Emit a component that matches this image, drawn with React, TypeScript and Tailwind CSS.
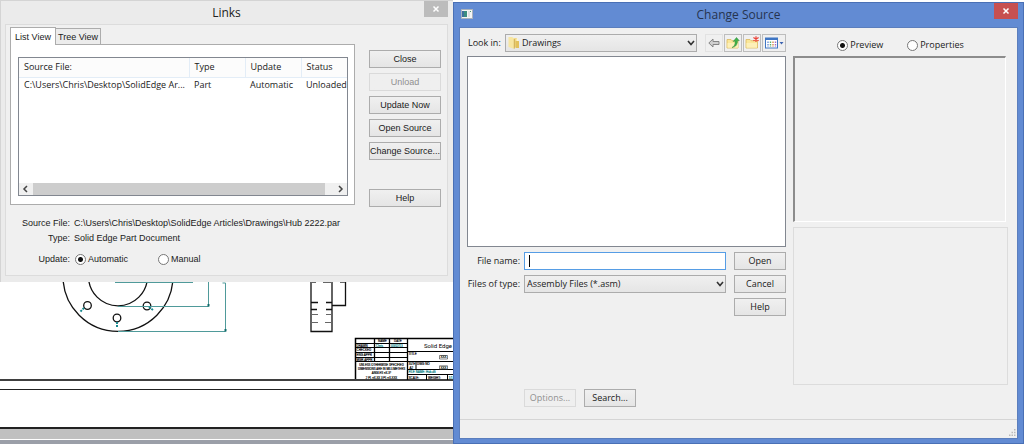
import { useState } from "react";
import type { ReactNode } from "react";

type LinkRow = { source: string; type: string; update: string; status: string };

const rows: LinkRow[] = [
  { source: "C:\\Users\\Chris\\Desktop\\SolidEdge Ar...", type: "Part", update: "Automatic", status: "Unloaded" },
];

const linkActions = [
  { label: "Close" },
  { label: "Unload", disabled: true },
  { label: "Update Now" },
  { label: "Open Source" },
  { label: "Change Source..." },
];

export default function App() {
  return (
    <div className="grid min-h-screen grid-cols-[453fr_571fr] overflow-hidden bg-white font-['Open_Sans','Noto_Sans',sans-serif] text-[9px] leading-3 text-[#1a1a1a]">
      <div className="flex min-w-0 flex-col">
        <LinksDialog />
        <Drawing />
        <div className="h-3 border-t-2 border-[#222] bg-[#c0c0c0]" />
        <div className="mt-px min-h-1 flex-1 bg-[#9b9fa8]" />
      </div>
      <ChangeSourceDialog />
    </div>
  );
}

function LinksDialog() {
  const [mode, setMode] = useState("Automatic");

  return (
    <section className="flex flex-col border-t border-l border-[#d4d4d4] bg-[#ebebeb] pr-[5px] pb-[6px] pl-1">
      <header className="relative flex h-[23px] justify-center">
        <h1 className="pt-1 text-[12px] leading-4 text-[#222]">Links</h1>
        <button aria-label="Close" className="absolute top-0 right-0 flex h-4 w-6 items-center justify-center bg-[#bcbcbc] text-white">
          <CrossIcon />
        </button>
      </header>

      <div className="border border-[#dcdcdc] bg-[#f0f0f0] pr-[6px] pb-[10px] pl-1 font-['Liberation_Sans',sans-serif]">
        <div className="flex gap-[14px]">
          <div className="min-w-0 flex-1 pt-[2px]">
            <div role="tablist" className="flex items-end">
              <button role="tab" aria-selected="true" className="relative z-10 -mb-px h-[18px] w-[46px] border border-b-0 border-[#acacac] bg-white">
                List View
              </button>
              <button role="tab" aria-selected="false" className="h-4 w-[45px] border border-b-0 border-l-0 border-[#acacac] bg-[#ececec]">
                Tree View
              </button>
            </div>
            <div className="border border-[#acacac] bg-white py-3 pr-[6px] pb-2 pl-[7px]">
              <div className="flex h-[139px] flex-col border border-[#828790] font-['Open_Sans',sans-serif]">
                <div className="min-h-0 flex-1 overflow-hidden">
                  <table className="w-full table-fixed text-left whitespace-nowrap">
                    <thead>
                      <tr className="h-[19px] bg-[#fcfcfc]">
                        <th className="border-r border-b border-[#e3edf7] pl-[5px] font-normal">Source File:</th>
                        <th className="w-14 border-r border-b border-[#e3edf7] pl-[5px] font-normal">Type</th>
                        <th className="w-14 border-r border-b border-[#e3edf7] pl-[5px] font-normal">Update</th>
                        <th className="w-[46px] border-b border-[#e3edf7] pl-[5px] font-normal">Status</th>
                      </tr>
                    </thead>
                    <tbody>
                      {rows.map((r) => (
                        <tr key={r.source} className="h-4">
                          <td className="pl-[5px]">{r.source}</td>
                          <td className="pl-[5px]">{r.type}</td>
                          <td className="pl-[5px]">{r.update}</td>
                          <td className="pl-[5px]">{r.status}</td>
                        </tr>
                      ))}
                    </tbody>
                  </table>
                </div>
                <div className="flex h-3 bg-[#f0f0f0]">
                  <button aria-label="Scroll left" className="flex w-[14px] items-center justify-center">
                    <Chevron d="M5 1 2 4l3 3" />
                  </button>
                  <div className="flex-1 bg-[#cdcdcd]" />
                  <div className="w-2" />
                  <button aria-label="Scroll right" className="flex w-[14px] items-center justify-center">
                    <Chevron d="m3 1 3 3-3 3" />
                  </button>
                </div>
              </div>
            </div>
          </div>

          <div className="flex w-[72px] flex-col gap-[5px] pt-[25px]">
            {linkActions.map((a) => (
              <PushButton key={a.label} disabled={a.disabled} className="h-[18px]">
                {a.label}
              </PushButton>
            ))}
            <PushButton className="mt-6 h-[18px]">Help</PushButton>
          </div>
        </div>

        <dl className="grid grid-cols-[60px_1fr] gap-x-1 gap-y-[3px] pt-[10px]">
          <dt className="text-right">Source File:</dt>
          <dd>C:\Users\Chris\Desktop\SolidEdge Articles\Drawings\Hub 2222.par</dd>
          <dt className="text-right">Type:</dt>
          <dd>Solid Edge Part Document</dd>
        </dl>
        <div role="radiogroup" aria-label="Update" className="flex items-center gap-[5px] pt-[9px]">
          <span className="w-[60px] text-right">Update:</span>
          <div className="flex gap-[30px]">
            {["Automatic", "Manual"].map((m) => (
              <Radio key={m} name="update" label={m} checked={mode === m} onChange={() => setMode(m)} />
            ))}
          </div>
        </div>
      </div>
    </section>
  );
}

function ChangeSourceDialog() {
  const [view, setView] = useState("Preview");
  const [fileName, setFileName] = useState("");

  return (
    <section className="mt-[2px] flex min-w-0 flex-col border border-[#4a70b5] bg-[#628bd3] px-[5px] pb-1">
      <header className="relative flex h-6 justify-center">
        <span className="absolute top-[6px] left-[2px]">
          <AppIcon />
        </span>
        <h2 className="pt-1 text-[12px] leading-4 text-[#26344f]">Change Source</h2>
        <button aria-label="Close" className="absolute top-0 right-0 flex h-4 w-6 items-center justify-center bg-[#c75050] text-white">
          <CrossIcon />
        </button>
      </header>

      <div className="flex flex-1 flex-col border border-[#5b7ebd] bg-[#f0f0f0]">
        <div className="flex flex-1 gap-[7px] pt-[6px] pr-[9px] pl-[7px]">
          <div className="flex min-w-0 flex-1 flex-col">
            <div className="flex h-[18px] items-center">
              <label htmlFor="look-in" className="w-[38px] pl-px">
                Look in:
              </label>
              <div className="relative flex-1">
                <span className="pointer-events-none absolute top-[3px] left-[3px]">
                  <FolderIcon />
                </span>
                <select id="look-in" className="block h-[18px] w-full appearance-none border border-[#acacac] bg-linear-to-b from-[#f0f0f0] to-[#e5e5e5] pl-4">
                  <option>Drawings</option>
                </select>
                <SelectArrow />
              </div>
              <div className="ml-2 flex gap-px">
                <ToolButton label="Back" className="w-[18px] border-[#e2e2e2]">
                  <BackIcon />
                </ToolButton>
                <ToolButton label="Up one level" className="w-[18px] border-[#bdbdbd]">
                  <UpIcon />
                </ToolButton>
                <ToolButton label="New folder" className="w-[18px] border-[#bdbdbd]">
                  <NewFolderIcon />
                </ToolButton>
                <ToolButton label="View menu" className="w-6 border-[#bdbdbd]">
                  <ViewIcon />
                </ToolButton>
              </div>
            </div>

            <div role="listbox" aria-label="Files" className="mt-1 h-[191px] border border-[#828790] bg-white" />

            <div className="mt-[5px] flex gap-2">
              <div className="flex min-w-0 flex-1 flex-col gap-[5px]">
                <div className="flex items-center gap-1">
                  <label htmlFor="file-name" className="w-[53px] text-right">
                    File name:
                  </label>
                  <div className="relative flex-1">
                    <input
                      id="file-name"
                      value={fileName}
                      onChange={(e) => setFileName(e.target.value)}
                      className="block h-[18px] w-full border border-[#569de5] bg-white px-1 outline-none"
                    />
                    {fileName === "" && <span className="pointer-events-none absolute top-[3px] left-[5px] h-3 w-px bg-black" />}
                  </div>
                </div>
                <div className="flex items-center gap-1">
                  <label htmlFor="file-type" className="w-[53px] text-right whitespace-nowrap">
                    Files of type:
                  </label>
                  <div className="relative flex-1">
                    <select id="file-type" className="block h-[18px] w-full appearance-none border border-[#acacac] bg-linear-to-b from-[#f0f0f0] to-[#e5e5e5] pl-[2px]">
                      <option>Assembly Files (*.asm)</option>
                    </select>
                    <SelectArrow />
                  </div>
                </div>
              </div>
              <div className="flex w-[52px] flex-col gap-[5px]">
                <PushButton className="h-[18px]">Open</PushButton>
                <PushButton className="h-[18px]">Cancel</PushButton>
                <PushButton className="h-[18px]">Help</PushButton>
              </div>
            </div>

            <div className="mt-auto mb-3 flex gap-2 pl-[57px]">
              <PushButton disabled className="h-[18px] w-[52px]">
                Options...
              </PushButton>
              <PushButton className="h-[18px] w-[52px]">Search...</PushButton>
            </div>
          </div>

          <div className="flex w-[215px] flex-col">
            <div role="radiogroup" aria-label="Pane" className="flex h-[22px] items-center justify-center gap-6">
              {["Preview", "Properties"].map((v) => (
                <Radio key={v} name="pane" label={v} checked={view === v} onChange={() => setView(v)} />
              ))}
            </div>
            <div className="mr-[2px] h-[166px] border-t-2 border-r border-b border-l-2 border-t-[#8c8c8c] border-r-white border-b-white border-l-[#8c8c8c]" />
            <div className="mt-[5px] h-[158px] border border-[#dcdcdc]" />
          </div>
        </div>
        <footer className="flex h-[19px] items-end justify-end border-t border-[#d5d5d5] p-px">
          <GripIcon />
        </footer>
      </div>
    </section>
  );
}

function PushButton({
  children,
  disabled,
  className,
}: {
  children: ReactNode;
  disabled?: boolean;
  className: string;
}) {
  return (
    <button
      disabled={disabled}
      className={`border border-[#acacac] bg-linear-to-b from-[#f0f0f0] to-[#e5e5e5] text-center whitespace-nowrap disabled:border-[#dadada] disabled:from-[#efefef] disabled:to-[#efefef] disabled:text-[#8f8f8f] ${className}`}
    >
      {children}
    </button>
  );
}

function ToolButton({
  label,
  children,
  className,
}: {
  label: string;
  children: ReactNode;
  className: string;
}) {
  return (
    <button
      aria-label={label}
      className={`flex h-[18px] items-center justify-center border bg-[#f0f0f0] ${className}`}
    >
      {children}
    </button>
  );
}

function Radio({
  name,
  label,
  checked,
  onChange,
}: {
  name: string;
  label: string;
  checked: boolean;
  onChange: () => void;
}) {
  return (
    <label className="flex items-center gap-[2px]">
      <input
        type="radio"
        name={name}
        checked={checked}
        onChange={onChange}
        className="size-[11px] appearance-none rounded-full border border-[#777] bg-white checked:bg-[radial-gradient(circle,#111_0_2px,#fff_3px)]"
      />
      {label}
    </label>
  );
}

function SelectArrow() {
  return (
    <svg viewBox="0 0 8 8" className="pointer-events-none absolute top-[5px] right-[2px] size-2">
      <path d="m1 2 3 3.500L7 2" fill="none" stroke="#333" strokeWidth="1.600" />
    </svg>
  );
}

function Chevron({ d }: { d: string }) {
  return (
    <svg viewBox="0 0 8 8" className="size-2">
      <path d={d} fill="none" stroke="#444" strokeWidth="1.500" />
    </svg>
  );
}

function CrossIcon() {
  return (
    <svg viewBox="0 0 8 8" className="size-2">
      <path d="m1.500 1.500 5 5m0-5-5 5" stroke="currentColor" strokeWidth="1.500" />
    </svg>
  );
}

function AppIcon() {
  return (
    <svg viewBox="0 0 12 10" className="h-[10px] w-3">
      <rect x=".5" y=".5" width="11" height="9" fill="#f4f4f4" stroke="#aab2bd" />
      <rect x="1" y="2" width="5" height="6" fill="#3c8d80" />
      <rect x="1" y="2" width="2" height="6" fill="#3f6f9d" />
      <path d="M8 2v6" stroke="#ccc" />
      <path d="M9.500 2v1" stroke="#4c9a6d" />
    </svg>
  );
}

function FolderIcon() {
  return (
    <svg viewBox="0 0 12 12" className="size-3">
      <path d="M4 1h5v9H4z" fill="#efd888" />
      <path d="M7.500 4h3.500v7H7.500z" fill="#e2c15c" />
      <path d="M.5 0H4l2.500 1.500V12L.5 10z" fill="#f7e6a2" />
      <path d="M6.300 2v9.500" stroke="#c9a548" strokeWidth=".9" />
      <path d="M8.500 1.500h1.500V4H8.500z" fill="#fff6d0" />
    </svg>
  );
}

function BackIcon() {
  return (
    <svg viewBox="0 0 12 12" className="size-3">
      <path d="M.8 6 5 2v2.500h6v3H5V10z" fill="#cfcfcf" stroke="#858585" strokeWidth="1" />
    </svg>
  );
}

function UpIcon() {
  return (
    <svg viewBox="0 0 14 14" className="size-[14px] shrink-0">
      <path d="M1 3.500h4l1 1.200h6V12H1z" fill="#fbe79a" stroke="#dcb95c" strokeWidth=".8" />
      <path d="M1.500 7H12v4.700H1.500z" fill="#fdf0b8" />
      <path d="M6 11.500C8.500 10.500 9.500 8 9 5L7.200 5.500 10.500 1.500l2.800 3.200-2-.1c.4 3.500-1.300 6.400-5.300 6.900z" fill="#3fb24a" stroke="#2a8a38" strokeWidth=".5" />
    </svg>
  );
}

function NewFolderIcon() {
  return (
    <svg viewBox="0 0 14 14" className="size-[14px] shrink-0">
      <path d="M1 3.500h4l1 1.200h6.500V12H1z" fill="#fbe79a" stroke="#dcb95c" strokeWidth=".8" />
      <path d="M1.500 7H12v4.700H1.500z" fill="#fdf0b8" />
      <path d="M11 .3v5.800M8.400 1.600l5.200 3.200M13.600 1.600 8.400 4.800" stroke="#ec4238" strokeWidth="1.200" />
    </svg>
  );
}

function ViewIcon() {
  return (
    <svg viewBox="0 0 20 14" className="h-[14px] w-5 shrink-0">
      <rect x="1.500" y="2" width="12" height="10" fill="#fff" stroke="#3f76c4" />
      <path d="M1 3h13" stroke="#3f76c4" strokeWidth="2" />
      <path d="M4 5.500v5.500" stroke="#6a8fd8" strokeWidth="1.400" strokeDasharray="1.500 1" />
      <path d="M6.500 5.500v5.500" stroke="#58b26b" strokeWidth="1.400" strokeDasharray="1.500 1" />
      <path d="M9 5.500v5.500" stroke="#d88a4a" strokeWidth="1.400" strokeDasharray="1.500 1" />
      <path d="M11.500 5.500v5.500" stroke="#9a6ac8" strokeWidth="1.400" strokeDasharray="1.500 1" />
      <path d="M15.500 6h4l-2 2.500z" fill="#3b62b0" />
    </svg>
  );
}

function GripIcon() {
  return (
    <svg viewBox="0 0 8 8" className="size-2" fill="#bababa">
      <path d="M6 0h1.500v1.500H6zM3.500 2.800H5v1.500H3.500zM6 2.800h1.500v1.500H6zM1 5.600h1.500v1.500H1zM3.500 5.600H5v1.500H3.500zM6 5.600h1.500v1.500H6z" />
    </svg>
  );
}

// Flange front and side view with dimensions, and the sheet's title block
function Drawing() {
  return (
    <svg viewBox="0 282 453 145" className="block w-full bg-white font-['Liberation_Sans',sans-serif]">
      <g fill="none" stroke="#111" strokeWidth="1.300">
        <circle cx="118" cy="276.300" r="55" />
        <circle cx="118" cy="276.300" r="29.500" />
        <circle cx="87.500" cy="305.500" r="3.800" />
        <circle cx="147" cy="306" r="3.800" />
        <circle cx="117" cy="318" r="3.800" />
      </g>
      <g fill="none" stroke="#4f9a9a" strokeWidth="1">
        <path d="M115 282.500h78M118 306.500h90.500V282M118 331.500h107.500V283h-3" />
      </g>
      <path d="M84 308l-4 4M149 307l4 3M117 322v5" stroke="#1a8a90" strokeWidth="2" strokeDasharray="2 1" />
      <path d="M207.500 304h2v2.500h-2zM224.500 329h2v2.500h-2z" fill="#0f6a6a" />

      <g fill="none" stroke="#111" strokeWidth="1.300">
        <path d="M311 282v49.500h21V282M332 305.500h13.500V282" />
        <path d="M311 302.500h7M326 302.500h6M311 309.500h6M326 309.500h6" />
      </g>
      <path d="M311 314.500h7M326 314.500h6M311 322.500h7M325 322.500h7M312 282.500h4M323 282.500h9M340 282.500h5" stroke="#666" />

      <path d="M355.500 379V338.500H453M0 380h453" fill="none" stroke="#000" strokeWidth="1.500" />
      <path d="M0 389.500h453" stroke="#222" strokeWidth="1.200" />
      <g fill="none" stroke="#000" strokeWidth="1">
        <path d="M356 343.500h51.500M356 347.500h51.500M356 352.500h51.500M356 357.500h51.500M356 361.500h51.500" />
        <path d="M374.500 339v22.500M389.500 339v22.500M407.500 339v41" strokeWidth="1.300" />
        <path d="M407.500 351.500H453M407.500 361.500H453M407.500 369.500H453M407.500 374.500H453" strokeWidth="1.200" />
        <path d="M416 362v7.500M426.500 375v5M447.500 375v5" />
      </g>
      <g fontSize="3" fill="#000" stroke="#000" strokeWidth=".15">
        <text x="378" y="342.300">NAME</text>
        <text x="394" y="342.300">DATE</text>
        <text x="356.500" y="346.800">DRAWN</text>
        <text x="356.500" y="351.300">CHECKED</text>
        <text x="356.500" y="356.300">ENG APPR</text>
        <text x="356.500" y="360.800">MGR APPR</text>
        <text x="408.500" y="354.800">TITLE</text>
        <text x="408.500" y="365">SIZE</text>
        <text x="409.500" y="368.600">A2</text>
        <text x="417" y="365">DWG NO</text>
        <text x="440.500" y="358.400">XXX</text>
        <text x="440.500" y="368.700">XXX</text>
        <text x="408.500" y="378.600">SCALE:</text>
        <text x="428" y="378.600">WEIGHT:</text>
      </g>
      <path d="M439.500 355.500h8v3.500h-8zM439.500 365.800h8v3.500h-8z" fill="none" stroke="#333" strokeWidth=".6" />
      <g fontSize="3" fill="#007c80" stroke="#007c80" strokeWidth=".15">
        <text x="376" y="346.800">Chris</text>
        <text x="391" y="346.800">03/02/13</text>
        <text x="408.500" y="373.300">FILE NAME: Hub.dft</text>
        <text x="448.500" y="378.600">1/1</text>
      </g>
      <g fontSize="2.800" textAnchor="middle" stroke="#000" strokeWidth=".15">
        <text x="381.500" y="365.800">UNLESS OTHERWISE SPECIFIED</text>
        <text x="381.500" y="370">DIMENSIONS ARE IN MILLIMETERS</text>
        <text x="381.500" y="374.300">ANGLES ±X.X°</text>
        <text x="381.500" y="378.500">2 PL ±X.XX 3 PL ±X.XXX</text>
      </g>
      <text x="452" y="347.500" fontSize="6" textAnchor="end" className="font-[Roboto,sans-serif]">
        Solid Edge
      </text>
    </svg>
  );
}
